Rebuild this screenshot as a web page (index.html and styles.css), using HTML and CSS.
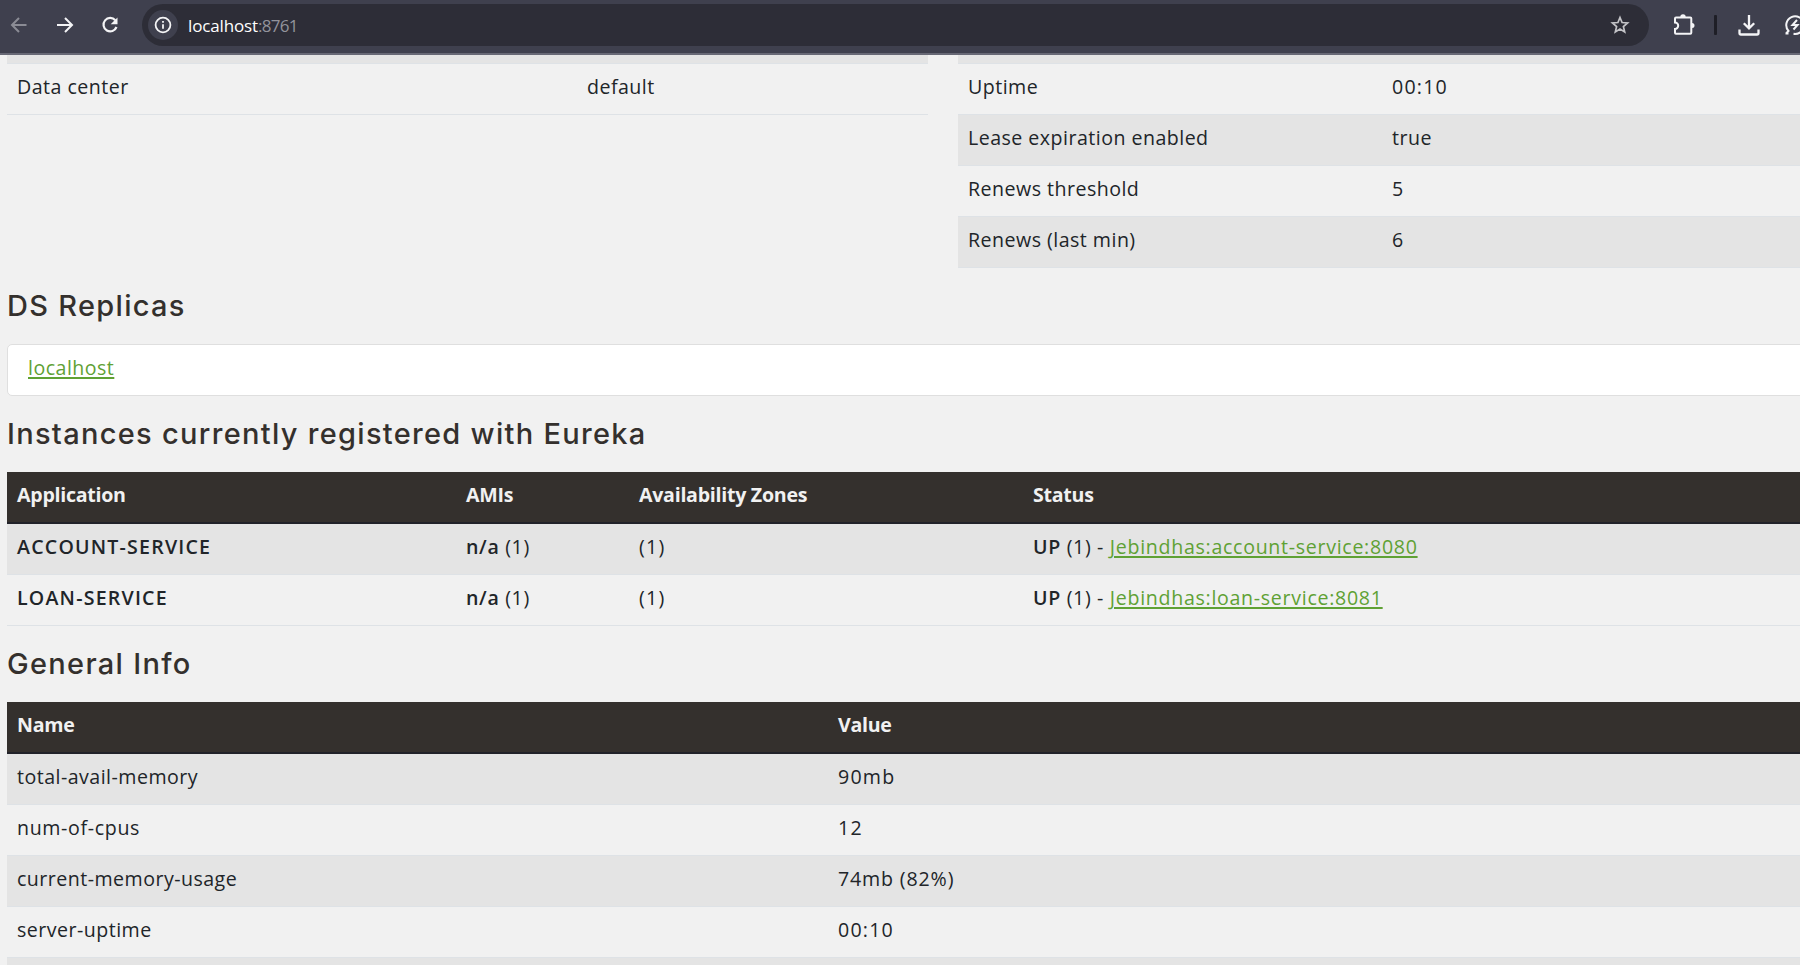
FILE: index.html
```html
<!DOCTYPE html>
<html lang="en">
<head>
<meta charset="utf-8">
<title>Eureka</title>
<link rel="stylesheet" href="styles.css">
</head>
<body>
<header class="toolbar">
  <svg class="icon back" viewBox="0 0 24 24"><path d="M19.500 12H5M12 5l-7 7 7 7"/></svg>
  <svg class="icon forward" viewBox="0 0 24 24"><path d="M4 12h15M12 5l7 7-7 7"/></svg>
  <svg class="icon reload" viewBox="0 0 24 24"><path d="M17.300 7.300A6.700 6.700 0 1 0 18.500 14"/><path class="solid" d="M19.500 4.500v6.800h-6.800z"/></svg>
  <div class="omnibox">
    <span class="site-info"><svg viewBox="0 0 20 20"><circle cx="10" cy="10" r="7.4"/><path d="M10 9.2v4.600M10 6v1.800"/></svg></span>
    <span class="url">localhost<span class="port">:8761</span></span>
    <svg class="star" viewBox="0 0 24 24"><path d="M12 4.500l2.100 5 5.500.500-4.200 3.600 1.300 5.400-4.700-2.900L7.300 19l1.300-5.400L4.400 10l5.500-.500z"/></svg>
  </div>
  <svg class="icon puzzle" viewBox="0 0 24 24"><path d="M5 4.500h14.300a1 1 0 0 1 1 1v14.300a1 1 0 0 1-1 1H5a1 1 0 0 1-1-1v-3.900a3.200 3.200 0 0 0 0-6.400v-4a1 1 0 0 1 1-1z"/><path class="solid" d="M9.300 4a2.700 2.700 0 0 1 5.400 0zM21 10a2.500 2.500 0 0 1 0 5z"/></svg>
  <span class="divider"></span>
  <svg class="icon download" viewBox="0 0 24 24"><path d="M12 2v13M6.800 10.200l5.200 5.200 5.200-5.200M2.500 16.500v3.500q0 1.500 1.500 1.500h16q1.500 0 1.500-1.500v-3.500"/></svg>
  <svg class="icon bolt" viewBox="0 0 24 24"><path d="M3 20.500l2.500-2.500a8.800 8.800 0 1 1 5 2.800M2.500 20.500h3"/><path d="M14 7l-4.500 5h5l-4 4.500"/></svg>
</header>
<main class="page">
  <div class="summary">
    <div class="grid environment">
      <div class="row sliver"></div>
      <div class="row"><span>Data center</span><span>default</span></div>
    </div>
    <div class="grid status">
      <div class="row sliver"></div>
      <div class="row"><span>Uptime</span><span class="num">00:10</span></div>
      <div class="row striped"><span>Lease expiration enabled</span><span>true</span></div>
      <div class="row"><span>Renews threshold</span><span class="num">5</span></div>
      <div class="row striped"><span>Renews (last min)</span><span class="num">6</span></div>
    </div>
  </div>
  <h1>DS Replicas</h1>
  <div class="card"><a>localhost</a></div>
  <h1>Instances currently registered with Eureka</h1>
  <div class="grid instances">
    <div class="row head"><span>Application</span><span>AMIs</span><span>Availability Zones</span><span>Status</span></div>
    <div class="row striped"><b class="app">ACCOUNT-SERVICE</b><span class="count"><b>n/a</b> (1)</span><span class="num">(1)</span><span class="count"><b>UP</b> (1) - <a class="instance">Jebindhas:account-service:8080</a></span></div>
    <div class="row"><b class="app">LOAN-SERVICE</b><span class="count"><b>n/a</b> (1)</span><span class="num">(1)</span><span class="count"><b>UP</b> (1) - <a class="instance">Jebindhas:loan-service:8081</a></span></div>
  </div>
  <h1>General Info</h1>
  <div class="grid general">
    <div class="row head"><span>Name</span><span>Value</span></div>
    <div class="row striped"><span>total-avail-memory</span><span class="num">90mb</span></div>
    <div class="row"><span class="count">num-of-cpus</span><span class="num">12</span></div>
    <div class="row striped"><span>current-memory-usage</span><span class="memory">74mb (82%)</span></div>
    <div class="row"><span>server-uptime</span><span class="num">00:10</span></div>
    <div class="row striped"></div>
  </div>
</main>
</body>
</html>
```
FILE: styles.css
```css
* { box-sizing: border-box; }
body { margin: 0; height: 965px; overflow: hidden; background: #f1f1f1; color: #212529; font: 19.6px/30px "Open Sans", sans-serif; letter-spacing: 0.47px; }
.toolbar { display: flex; align-items: center; width: 1812px; height: 55px; padding: 0 0 3px 7px; background: #3f404e; border-bottom: 2px solid #676875; }
.icon { flex: none; width: 24px; height: 24px; fill: none; stroke: #f4f4f6; stroke-width: 2; }
.back { stroke: #8b8c95; }
.forward { margin-left: 22px; }
.reload { margin-left: 21px; stroke-width: 2.2; }
.omnibox { display: flex; align-items: center; width: 1507px; height: 42px; margin-left: 20px; padding: 0 17px 0 6px; border-radius: 21px; background: #2d2d37; }
.site-info { display: flex; align-items: center; justify-content: center; width: 30px; height: 30px; border-radius: 50%; background: #3f404e; }
.site-info svg { width: 20px; height: 20px; fill: none; stroke: #f4f4f6; stroke-width: 1.8; }
.url { margin: 1px 0 0 10px; color: #fff; font-size: 17px; letter-spacing: -0.14px; }
.port { color: #92939b; letter-spacing: -0.7px; }
.star { width: 24px; height: 24px; margin-left: auto; fill: none; stroke: #c3c3c7; stroke-width: 1.7; }
.puzzle { margin-left: 22px; }
.icon .solid { fill: #f4f4f6; stroke: none; }
.divider { width: 3px; height: 20px; margin: 0 20px 0 19px; border-radius: 1px; background: #1e1e26; }
.download { stroke-width: 2.3; }
.bolt { margin-left: 22px; }
.page { width: 1810px; padding-left: 7px; }
.summary { display: grid; grid-template-columns: 921px 852px; column-gap: 30px; align-items: start; }
.row { display: grid; align-items: start; height: 51px; padding: 8px 10px 0; border-bottom: 1px solid #dee2e6; white-space: nowrap; }
.row.sliver { height: 9px; padding: 0; background: #e4e4e4; }
.row.striped { background: #e4e4e4; }
.environment .row { grid-template-columns: 570px 1fr; }
.status .row { grid-template-columns: 424px 1fr; }
.instances .row { grid-template-columns: 449px 173px 394px 1fr; }
.general .row { grid-template-columns: 821px 1fr; }
.row.head { height: 52px; background: #34302d; border-bottom: 2px solid #212229; color: #f1f1f1; font-weight: 700; letter-spacing: -0.27px; }
b { font-weight: 600; }
.num, .app { letter-spacing: 1.2px; }
.count { letter-spacing: 0.65px; }
.instance { letter-spacing: 0.7px; }
.memory { letter-spacing: 0.85px; }
a { color: #5fa134; text-decoration: underline; text-decoration-thickness: 2px; text-underline-offset: 2px; }
h1 { margin: 20px 0; color: #34302d; font: 500 29px/36px Inter, sans-serif; letter-spacing: 1.3px; white-space: nowrap; }
.card { height: 52px; padding: 8px 20px; background: #fff; border: 1px solid #dfdfdf; border-radius: 5px; }
```
